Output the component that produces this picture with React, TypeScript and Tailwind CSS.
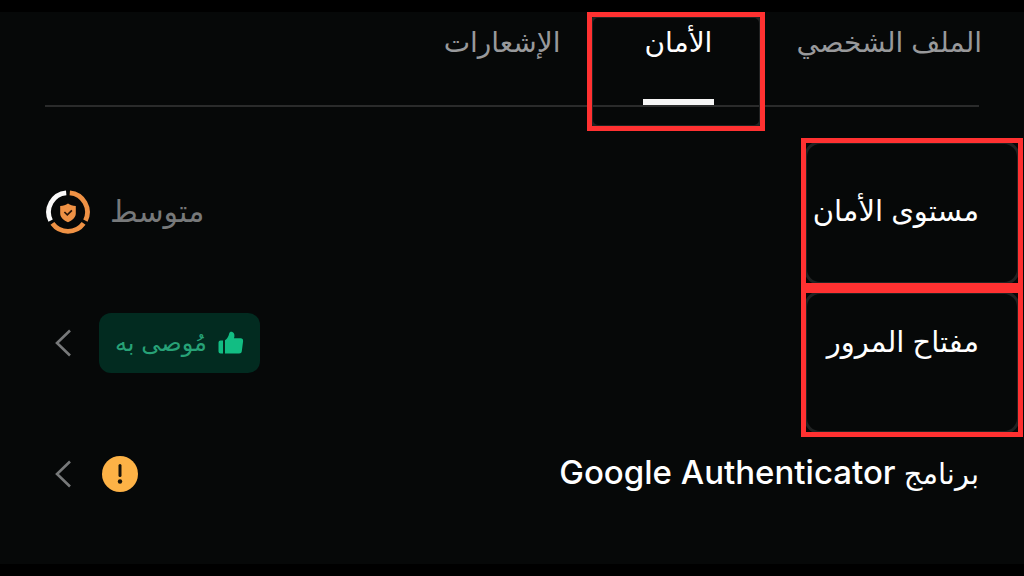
import type { ReactNode } from "react";

function Highlight({ className, corner = "rounded-2xl" }: { className: string; corner?: string }) {
  return (
    <span
      aria-hidden="true"
      className={`pointer-events-none absolute border-5 border-[#ff3131] ${className}`}
    >
      <span className="absolute inset-0 overflow-hidden">
        <span className={`absolute -inset-0.5 border-3 border-[#202222] ${corner}`} />
      </span>
    </span>
  );
}

function Tab({ label, active, children }: { label: string; active?: boolean; children?: ReactNode }) {
  return (
    <button
      type="button"
      role="tab"
      aria-selected={!!active}
      className={`relative flex h-full items-start pt-1.5 ${active ? "text-white" : "text-[#98999b]"}`}
    >
      {label}
      {active && <span className="absolute -inset-x-0.5 bottom-0 h-1.5 bg-[#f5f5f5]" />}
      {children}
    </button>
  );
}

function Row({ label, highlight, children }: { label: ReactNode; highlight?: string; children: ReactNode }) {
  return (
    <li className="relative flex h-[131px] items-center justify-between">
      {highlight && <Highlight className={highlight} />}
      <h2 className="relative pb-0.5">{label}</h2>
      <div className="flex items-center">{children}</div>
    </li>
  );
}

function OpenButton({ label }: { label: string }) {
  return (
    <button type="button" aria-label={label} className="px-2.5">
      <svg className="h-7 w-4" viewBox="0 0 16 28" fill="none" stroke="#77797a" strokeWidth="2.6">
        <path d="M15 1.5 2 14l13 12.5" />
      </svg>
    </button>
  );
}

function LevelIcon() {
  return (
    <svg className="me-px size-11" viewBox="0 0 44 44" fill="none" aria-hidden="true">
      <g strokeWidth="4.8">
        <path d="M23.8 2.8A19.3 19.3 0 0 1 39.4 30.6" stroke="#ef9245" />
        <path d="M37.6 33.4A19.3 19.3 0 0 1 6.4 33.4" stroke="#ef9245" />
        <path d="M4.6 30.6A19.3 19.3 0 0 1 20.2 2.8" stroke="#fafafa" />
      </g>
      <path d="M22 13.5c2.2 1.7 4.6 2.3 7.8 2.4v7.6c0 4-3.7 6.800-7.8 8.800-4.100-2-7.800-4.800-7.800-8.800v-7.600c3.200-.1 5.600-.7 7.800-2.400Z" fill="#ef9245" />
      <path d="m18.4 22 2.9 2.8 4.6-4.4" stroke="#2a160a" strokeWidth="1.7" />
    </svg>
  );
}

function ThumbIcon() {
  return (
    <svg className="h-6 w-7" viewBox="0 0 28 24" fill="#12bd83" aria-hidden="true">
      <path d="M3.5 9.5H6v13H3.5a2 2 0 0 1-2-2v-9a2 2 0 0 1 2-2Z" />
      <path d="M8 9.200c2.400-1.500 3.600-4 4.200-6.700.4-1.700 1.500-2 2.700-1.700 2 .6 2.800 2.400 2.500 4.700l-.4 1.800h6.600c1.700 0 2.700 1.300 2.500 2.900l-1.300 10.100c-.2 1.400-1.200 2.200-2.600 2.200H8V9.200Z" />
    </svg>
  );
}

export default function App() {
  return (
    <main
      dir="rtl"
      lang="ar"
      className="min-h-screen overflow-hidden border-y-12 border-black bg-[#060808] font-['Inter','DejaVu_Sans',sans-serif] text-[29px] leading-12 text-white"
    >
      <div className="px-[45px]">
        <div className="h-[95px] border-b-2 border-[#2a2b2b] text-[28px]">
          <div role="tablist" className="-ms-[3px] flex h-full gap-[84px]">
            <Tab label="الملف الشخصي" />
            <Tab label="الأمان" active>
              <Highlight className="-left-[58px] -right-[53px] top-0 h-[119px]" corner="rounded-lg" />
            </Tab>
            <Tab label="الإشعارات" />
          </div>
        </div>
        <ul className="pt-[39px]">
          <Row label="مستوى الأمان" highlight="-right-11 -top-2 h-[150px] w-[222px]">
            <span className="me-5 pb-0.5 text-[30px] text-[#77797a]">متوسط</span>
            <LevelIcon />
          </Row>
          <Row label="مفتاح المرور" highlight="-right-11 top-[11px] h-[149px] w-[222px]">
            <span className="me-[18px] flex h-15 items-center gap-2.5 rounded-xl bg-[#022b20] pe-4 ps-[15px] text-2xl text-[#27a277]">
              <ThumbIcon />
              مُوصى به
            </span>
            <OpenButton label="مفتاح المرور" />
          </Row>
          <Row
            label={
              <>
                برنامج <span dir="ltr" className="text-[33px] font-medium">Google Authenticator</span>
              </>
            }
          >
            <svg className="me-[21px] size-9" viewBox="0 0 36 36" aria-hidden="true">
              <circle cx="18" cy="18" r="18" fill="#fdb246" />
              <path d="M18 9.5v10" stroke="#17120a" strokeWidth="3" strokeLinecap="round" />
              <circle cx="18" cy="25.5" r="2.2" fill="#17120a" />
            </svg>
            <OpenButton label="برنامج Google Authenticator" />
          </Row>
        </ul>
      </div>
    </main>
  );
}
